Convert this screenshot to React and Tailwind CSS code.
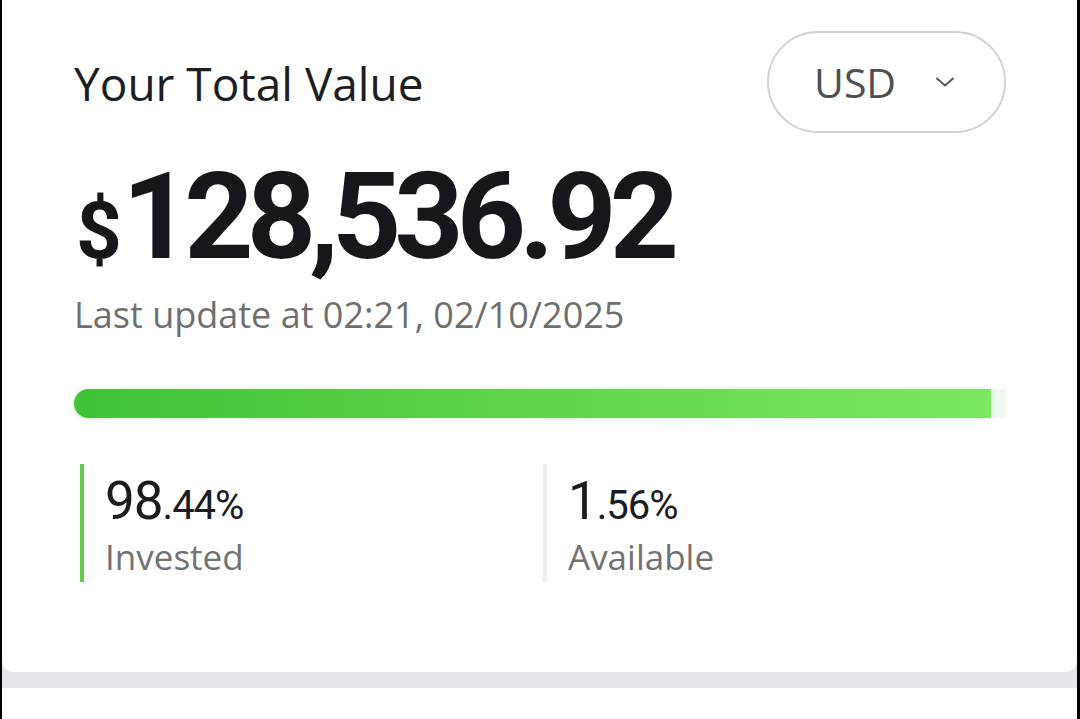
import React from 'react';

const sans = { fontFamily: '"Open Sans", "Noto Sans", sans-serif' };
const num = { fontFamily: 'Roboto, "Liberation Sans", sans-serif' };

function Chevron() {
  return (
    <svg width="22" height="12" viewBox="0 0 22 12" fill="none" className="block">
      <path d="M3 2.5 L11 9.5 L19 2.5" stroke="#5a5a5a" strokeWidth="2" strokeLinecap="round" strokeLinejoin="round" />
    </svg>
  );
}

function Stat({ whole, frac, label, bar }) {
  return (
    <div className={`h-[118px] pl-[21px] border-l-4 ${bar}`}>
      <div className="pt-[11px] leading-none text-[#1b1c1f] tracking-[-1px]" style={num}>
        <span className="text-[53px]">{whole}</span>
        <span className="text-[40px]">{frac}</span>
      </div>
      <div className="mt-[11px] text-[35px] leading-none text-[#727272]" style={sans}>
        {label}
      </div>
    </div>
  );
}

export default function App() {
  const invested = 98.44;

  return (
    <div className="w-[1080px] h-[719px] overflow-hidden bg-white border-l-2 border-r-[3px] border-black flex flex-col">
      <div className="bg-[#e4e6ec] pb-[16px]">
        <div className="bg-white rounded-b-[12px] pl-[72px] pr-[71px] pt-[31px] pb-[90px]">
          {/* Cabeçalho */}
          <div className="flex items-center justify-between h-[102px]">
            <h1 className="text-[46px] leading-none text-[#1d1e21] mt-[2px]" style={sans}>
              Your Total Value
            </h1>
            <button
              type="button"
              className="h-[102px] w-[239px] rounded-full border-2 border-[#d2d2d2] flex items-center pl-[45px] gap-[38px]"
            >
              <span className="text-[41px] leading-none text-[#4d4f53]" style={sans}>USD</span>
              <Chevron />
            </button>
          </div>

          {/* Valor */}
          <div className="mt-[24px] flex items-baseline text-[#15171a] font-bold leading-none" style={num}>
            <span className="text-[80px] ml-[2px]">$</span>
            <span className="text-[121px] tracking-[-7px]">128,536.92</span>
          </div>
          <p className="mt-[19px] text-[36px] leading-none text-[#6f6f6f]" style={sans}>
            Last update at 02:21, 02/10/2025
          </p>

          {/* Barra */}
          <div className="mt-[56px] h-[29px] w-full bg-[#f3f7f2] rounded-l-full">
            <div
              className="h-full rounded-l-full bg-gradient-to-r from-[#3fc236] to-[#7be85f] shadow-[0_0_6px_rgba(120,230,95,0.35)]"
              style={{ width: `${invested}%` }}
            />
          </div>

          {/* Estatísticas */}
          <div className="mt-[46px] ml-[6px] grid grid-cols-2">
            <Stat whole="98" frac=".44%" label="Invested" bar="border-[#5fcd4c]" />
            <Stat whole="1" frac=".56%" label="Available" bar="border-[#eaefe9]" />
          </div>
        </div>
      </div>
      <div className="flex-1 bg-white" />
    </div>
  );
}
